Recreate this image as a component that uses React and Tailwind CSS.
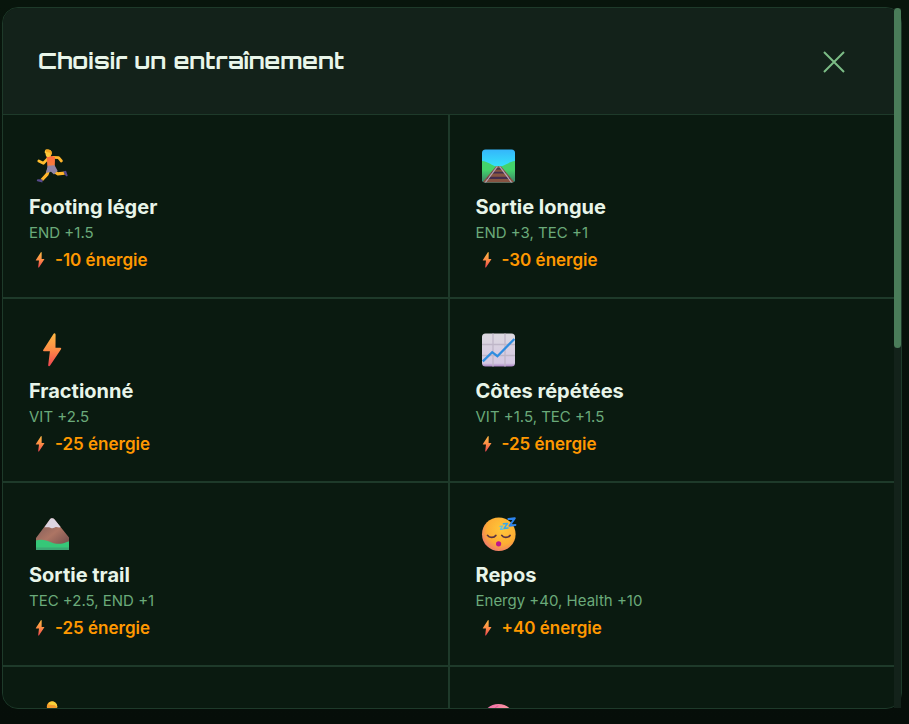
const RunnerIcon = () => (
  <svg viewBox="0 0 34 34" className="size-[34px]" aria-hidden="true">
    <defs>
      <linearGradient id="runner-shirt" x1="0" y1="0" x2="0" y2="1">
        <stop offset="0" stopColor="#ff6a3d" />
        <stop offset="1" stopColor="#f4803f" />
      </linearGradient>
    </defs>
    <path d="M13 9.4 8.4 14.2 3.8 12" fill="none" stroke="#ffbd2e" strokeWidth="2.8" strokeLinecap="round" strokeLinejoin="round" />
    <path d="M18 8.4 23.6 8.6 26.4 12" fill="none" stroke="#ffb52b" strokeWidth="2.8" strokeLinecap="round" strokeLinejoin="round" />
    <path d="M13.8 20.5 12 25.4 6.8 31" fill="none" stroke="#ffb52b" strokeWidth="3.2" strokeLinejoin="round" />
    <path d="m18.6 22 4 2.8 7-.6" fill="none" stroke="#ffb52b" strokeWidth="3.2" strokeLinejoin="round" />
    <path d="M11.6 7.6c2.4-1 6-.8 8.4.4l-.2 9-7.4.6z" fill="url(#runner-shirt)" />
    <path d="m12.6 16.8 7-.6 3 5.6-3.6 3.6-3-2.6-5 1.2z" fill="#8f84a5" />
    <path d="M10.8.8c2.6-.8 6.2 0 6 3.4-.2 2.4-1.6 3.8-3.4 3.8-2 0-3-1.2-2.8-3.6L9.8 4c-.2-1.6.2-2.6 1-3.2Z" fill="#ffc83a" />
    <path d="M10.4.8c2.4-.8 6.6-.2 6.4 3.6l-1 1.8-.8-2.4-3.8-.8z" fill="#f6a51e" />
    <path d="m3 30.2 4.6.2-.2 3.2-5-1.4c-1-.4-.6-2 .6-2ZM28.2 22.6l2.8-.8 1.6 4.4c.2 1-1 1.4-1.8.8z" fill="#574a8c" />
  </svg>
);

const RailwayIcon = () => (
  <svg viewBox="0 0 34 34" className="size-[34px]" aria-hidden="true">
    <defs>
      <linearGradient id="rail-sky" x1="0" y1="0" x2="0" y2="1">
        <stop offset="0" stopColor="#35b4fb" />
        <stop offset="0.5" stopColor="#35e2fa" />
      </linearGradient>
      <linearGradient id="rail-hill" x1="0" y1="0" x2="0" y2="1">
        <stop offset="0.4" stopColor="#43d36b" />
        <stop offset="1" stopColor="#3d7c66" />
      </linearGradient>
      <clipPath id="rail-clip">
        <rect x="0" y="0.5" width="33" height="33" rx="3.5" />
      </clipPath>
    </defs>
    <g clipPath="url(#rail-clip)">
      <path d="M0 0h34v34H0z" fill="url(#rail-sky)" />
      <path d="M0 12c6 .6 10 4.6 14 5.4h5c4-.8 8-4.8 15-5.4v22H0z" fill="url(#rail-hill)" />
      <path d="M14 17.2h5L33 34H0z" fill="#875442" />
      <path d="M13.6 19.2h5.8l1 1.3h-7.8zM10.2 22.8h12.6l1.4 1.8H8.8zM6.2 27.8h20.6l1.6 2.2H4.6z" fill="#432c4c" />
      <path d="M15.4 17.4 3 34M17.6 17.4 30 34" stroke="#b6a4b6" strokeWidth="1.2" />
    </g>
  </svg>
);

const BoltShape = ({ id }) => (
  <>
    <defs>
      <linearGradient id={id} x1="0" y1="0" x2="0" y2="1">
        <stop offset="0" stopColor="#ffb944" />
        <stop offset="0.5" stopColor="#fd8c45" />
        <stop offset="1" stopColor="#f14452" />
      </linearGradient>
    </defs>
    <path d="M11.6.8 1.2 17c-.4.7 0 1.2.7 1.2h6L6.2 32c-.1 1.4 1.2 1.5 1.9.5L19 16.2c.5-.8.1-1.4-.7-1.4h-4.8l.1-13c0-1.6-1.2-2.1-2-1Z" fill={`url(#${id})`} />
  </>
);

const BoltIcon = () => (
  <svg viewBox="-7 0 34 34" className="size-[34px]" aria-hidden="true">
    <BoltShape id="bolt-large" />
  </svg>
);

const ChartIcon = () => (
  <svg viewBox="0 0 34 34" className="size-[34px]" aria-hidden="true">
    <defs>
      <linearGradient id="chart-paper" x1="0" y1="0" x2="0" y2="1">
        <stop offset="0" stopColor="#dcd8df" />
        <stop offset="0.9" stopColor="#d5c8e3" />
        <stop offset="1" stopColor="#aa83c4" />
      </linearGradient>
    </defs>
    <rect x="0" y="0.5" width="33" height="33" rx="3.5" fill="url(#chart-paper)" />
    <path d="M11 .5v33M23 .5v33M0 11.5h33M0 22.5h33" stroke="#bfb6c8" strokeWidth="1.3" />
    <path d="m.8 28.4 9.4-9.2 5.2 4L32.4 6" fill="none" stroke="#2f8de0" strokeWidth="2.3" />
  </svg>
);

const MountainIcon = () => (
  <svg viewBox="0 0 34 34" className="size-[34px]" aria-hidden="true">
    <defs>
      <linearGradient id="mountain-rock" x1="0" y1="0" x2="1" y2="1">
        <stop offset="0.2" stopColor="#8a625c" />
        <stop offset="0.55" stopColor="#ad7564" />
        <stop offset="1" stopColor="#714d4c" />
      </linearGradient>
    </defs>
    <path d="M14.8 2.4c1-1.6 3.6-1.6 4.8 0L34 20.5V28H1v-7z" fill="url(#mountain-rock)" />
    <path d="M14.8 2.4c1-1.6 3.6-1.6 4.8 0l6 7.6c-2 1.6-3.4-.6-5.4.2-2.4 1-3.6 1.6-5.4.4-1.6-1-3.4 0-5.4-.4z" fill="#dcd4e0" />
    <path d="M1 23.6c5-1.6 10-.6 15 1.6 6 2.4 11 2 18-1V33H1z" fill="#36c778" />
    <path d="M1 30.6h33V33H1z" fill="#3ca673" />
  </svg>
);

const SleepIcon = () => (
  <svg viewBox="0 0 34 34" className="size-[34px] overflow-visible" aria-hidden="true">
    <defs>
      <radialGradient id="sleep-face" cx="0.6" cy="0.35" r="0.7">
        <stop offset="0" stopColor="#ffc83a" />
        <stop offset="0.65" stopColor="#fdac33" />
        <stop offset="1" stopColor="#ee7770" />
      </radialGradient>
    </defs>
    <circle cx="16.8" cy="17.2" r="16.8" fill="url(#sleep-face)" />
    <path d="M5.6 18.4c1.6 2.6 6.4 2.6 8.2 0M19.8 18.4c1.6 2.6 6.4 2.6 8.2 0" fill="none" stroke="#593343" strokeWidth="1.8" strokeLinecap="round" />
    <circle cx="16.6" cy="26.8" r="2.6" fill="#bd168f" />
    <g fill="none" strokeLinejoin="round" strokeLinecap="round">
      <path d="m26.4 2 6.4-.8-5.2 7.6 5.8-.8" stroke="#2d84ed" strokeWidth="2" />
      <path d="m21.4 6.8 4.2-.4-3.6 5 4-.4" stroke="#38a8ea" strokeWidth="1.5" />
      <path d="m18 9.4 2.6-.2-2.2 3.2 2.6-.2" stroke="#61bfe2" strokeWidth="1.2" />
    </g>
  </svg>
);

const YogaIcon = () => (
  <svg viewBox="0 0 34 34" className="size-[34px]" aria-hidden="true">
    <circle cx="17" cy="5.4" r="5.2" fill="#f59a2c" />
    <path d="M13.4 3.4c.2-4 8.8-4.4 9 3.2l-2.6-2.4z" fill="#f8d13a" />
    <path d="M11 12h12l2 12H9z" fill="#7d6bd0" />
    <path d="M4 26h26v5H4z" fill="#594a92" />
  </svg>
);

const BrainIcon = () => (
  <svg viewBox="0 0 34 34" className="size-[34px]" aria-hidden="true">
    <defs>
      <linearGradient id="brain-fill" x1="0" y1="0" x2="1" y2="0">
        <stop offset="0" stopColor="#ec6aae" />
        <stop offset="1" stopColor="#ff9c9c" />
      </linearGradient>
    </defs>
    <ellipse cx="16.5" cy="17" rx="15.5" ry="14" fill="url(#brain-fill)" />
    <path d="M10 8c4 0 3-2 6-3M19 9c2-2 4-1 6-1" fill="none" stroke="#d95597" strokeLinecap="round" />
  </svg>
);

const trainings = [
  { id: 'footing', Icon: RunnerIcon, name: 'Footing léger', gains: 'END +1.5', energy: '-10 énergie' },
  { id: 'longue', Icon: RailwayIcon, name: 'Sortie longue', gains: 'END +3, TEC +1', energy: '-30 énergie' },
  { id: 'fractionne', Icon: BoltIcon, name: 'Fractionné', gains: 'VIT +2.5', energy: '-25 énergie' },
  { id: 'cotes', Icon: ChartIcon, name: 'Côtes répétées', gains: 'VIT +1.5, TEC +1.5', energy: '-25 énergie' },
  { id: 'trail', Icon: MountainIcon, name: 'Sortie trail', gains: 'TEC +2.5, END +1', energy: '-25 énergie' },
  { id: 'repos', Icon: SleepIcon, name: 'Repos', gains: 'Energy +40, Health +10', energy: '+40 énergie' },
  { id: 'yoga', Icon: YogaIcon },
  { id: 'mental', Icon: BrainIcon }
];

const TrainingCard = ({ id, Icon, name, gains, energy }) => (
  <button type="button" aria-label={name ? undefined : id} className="flex flex-col items-start bg-[#0a1a10] px-[26px] pt-[27px] pb-6 text-left">
    <span className="flex h-12 items-center pl-1.5">
      <Icon />
    </span>
    {name && (
      <>
        <span className="mt-[5px] text-xl leading-6 font-bold text-[#e8f5e9]">{name}</span>
        <span className="mt-1 text-[15px] leading-5 text-[#6aaa7a]">{gains}</span>
        <span className="mt-1 flex items-center gap-2.5 pl-1.5 text-[17px] leading-[26px] font-semibold text-[#ff9800]">
          <svg viewBox="0 0 20 34" className="h-4 w-2.5" aria-hidden="true">
            <BoltShape id={`bolt-${id}`} />
          </svg>
          {energy}
        </span>
      </>
    )}
  </button>
);

const App = () => (
  <main className="h-screen bg-linear-to-b from-[#08150c] to-[#060e09] pt-[7px] pr-[7px] pb-[15px] pl-0.5 font-['Inter',sans-serif]">
    <div role="dialog" aria-labelledby="dialog-title" className="relative h-full rounded-2xl border border-[#1e3a2a] bg-[#0a1a10]">
      <div className="h-full overflow-hidden rounded-[15px] pr-[7px]">
        <header className="flex h-[107px] items-center justify-between border-b border-[#1e3a2a] bg-[#13221a] pt-px pr-9 pl-[35px]">
          <h2 id="dialog-title" className="font-['Orbitron','DejaVu_Sans',sans-serif] text-[23px] font-bold text-[#e8f5e9]">
            Choisir un entraînement
          </h2>
          <button type="button" aria-label="Fermer" className="flex size-12 items-center justify-center text-[#7cbd86]">
            <svg viewBox="0 0 22 22" className="size-[22px]" aria-hidden="true">
              <path d="m1 1 20 20M21 1 1 21" stroke="currentColor" strokeWidth="2" />
            </svg>
          </button>
        </header>
        <div className="grid auto-rows-fr grid-cols-2 gap-0.5 bg-[#1e3a2a]">
          {trainings.map((training) => (
            <TrainingCard key={training.id} {...training} />
          ))}
        </div>
      </div>
      <div className="absolute inset-y-0 right-0 w-[7px] bg-[#13221a]" aria-hidden="true">
        <div className="h-[48.5%] rounded-full bg-[#4a7c59]" />
      </div>
    </div>
  </main>
);

export default App;
